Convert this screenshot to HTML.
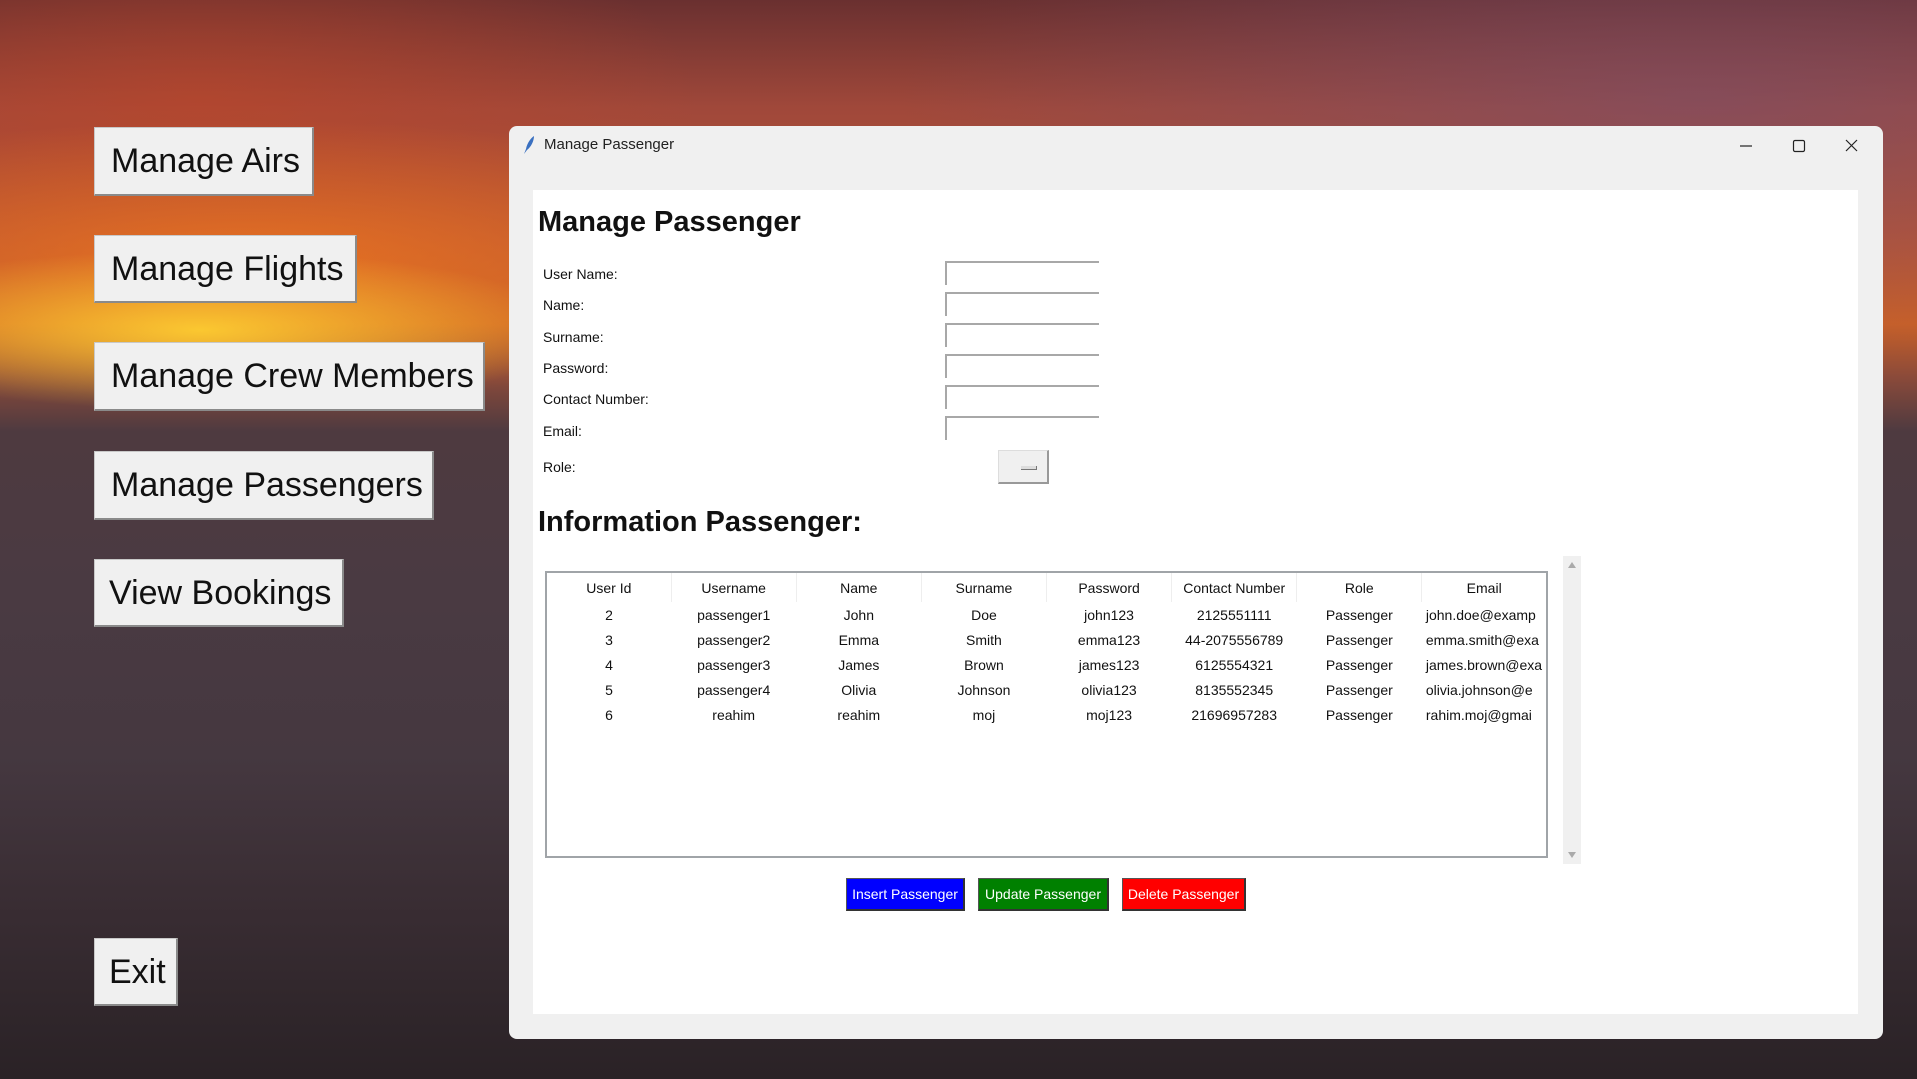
<!DOCTYPE html>
<html><head><meta charset="utf-8"><style>
*{margin:0;padding:0;box-sizing:border-box}
body{width:1917px;height:1079px;overflow:hidden;position:relative;font-family:"Liberation Sans",sans-serif;
background:
radial-gradient(ellipse 380px 80px at 200px 330px,rgba(255,210,50,.9),rgba(255,150,20,0) 100%),
radial-gradient(ellipse 600px 140px at 250px 260px,rgba(240,120,30,.8),rgba(200,80,20,0) 100%),
radial-gradient(ellipse 500px 200px at 200px 100px,rgba(190,70,40,.6),rgba(0,0,0,0) 100%),
radial-gradient(ellipse 800px 250px at 1700px 100px,rgba(120,80,110,.6),rgba(0,0,0,0) 100%),
linear-gradient(180deg,#6a3030 0%,#a0483a 10%,#b85434 22%,#c86028 30%,#8a4a3a 35%,#4e3a40 40%,#4a3a42 55%,#453840 70%,#382c32 85%,#2a2226 100%);}
.lb{position:absolute;left:94px;background:#f0f0f0;border:1px solid #c8c8c8;border-right:2px solid #8a8a8a;border-bottom:2px solid #8a8a8a;font-size:34px;color:#111;padding-left:16px;line-height:66px}
.win{position:absolute;left:509px;top:126px;width:1374px;height:913px;background:#f0f0f0;border-radius:8px}
.tt{position:absolute;left:35px;top:10px;font-size:15px;color:#222}
.content{position:absolute;left:24px;top:64px;width:1325px;height:824px;background:#fff}
.h{position:absolute;left:5px;font-weight:bold;font-size:29px;color:#111}
.lab{position:absolute;left:10px;font-size:14px;color:#111}
.ent{position:absolute;left:412px;width:154px;height:24px;border-top:2px solid #a8a8a8;border-left:2px solid #a8a8a8}
table{position:absolute;left:12px;top:381px;width:1003px;height:282px;border:2px solid #a0a4a8;border-collapse:collapse;font-size:14px;color:#111}
td,th{width:125px;text-align:center;font-weight:normal;height:25px;white-space:nowrap;overflow:hidden;max-width:125px}
th{border-right:1px solid #eee;height:30px}
.btn{position:absolute;top:688px;height:33px;color:#fff;font-size:14px;line-height:31px;text-align:center;border:1px solid #555;border-right:2px solid #333;border-bottom:2px solid #333}
</style></head><body>
<div class="lb" style="top:127px;width:220px;height:69px">Manage Airs</div>
<div class="lb" style="top:235px;width:263px;height:68px">Manage Flights</div>
<div class="lb" style="top:342px;width:391px;height:69px">Manage Crew Members</div>
<div class="lb" style="top:451px;width:340px;height:69px">Manage Passengers</div>
<div class="lb" style="top:559px;width:250px;height:68px;padding-left:14px">View Bookings</div>
<div class="lb" style="top:938px;width:84px;height:68px;padding-left:14px">Exit</div>

<div class="win">
<svg style="position:absolute;left:13px;top:9px" width="14" height="20" viewBox="0 0 14 20"><path d="M2 19 L4 14 C5 8 9 3 12 1 C12 6 9 12 5 15 Z" fill="#3a70c0"/></svg>
<div class="tt">Manage Passenger</div>
<svg style="position:absolute;left:1222px;top:10px" width="140" height="20"><path d="M9 10h12" stroke="#222" stroke-width="1.2"/><rect x="62.5" y="4.5" width="11" height="11" rx="1.5" fill="none" stroke="#222" stroke-width="1.2"/><path d="M115 4l11 11M126 4l-11 11" stroke="#222" stroke-width="1.2"/></svg>
<div class="content">
<div class="h" style="top:16px">Manage Passenger</div>
<div class="lab" style="top:76px">User Name:</div>
<div class="lab" style="top:107px">Name:</div>
<div class="lab" style="top:139px">Surname:</div>
<div class="lab" style="top:170px">Password:</div>
<div class="lab" style="top:201px">Contact Number:</div>
<div class="lab" style="top:233px">Email:</div>
<div class="lab" style="top:269px">Role:</div>
<div class="ent" style="top:71px"></div>
<div class="ent" style="top:102px"></div>
<div class="ent" style="top:133px"></div>
<div class="ent" style="top:164px"></div>
<div class="ent" style="top:195px"></div>
<div class="ent" style="top:226px"></div>
<div style="position:absolute;left:465px;top:260px;width:51px;height:34px;background:#f0f0f0;border:1px solid #ddd;border-right:2px solid #999;border-bottom:2px solid #999"><div style="position:absolute;left:22px;top:15px;width:16px;height:4px;border:1px solid #777;border-top:none;border-left:none;background:#ddd"></div></div>
<div class="h" style="top:316px">Information Passenger:</div>
<table>
<tr><th>User Id</th><th>Username</th><th>Name</th><th>Surname</th><th>Password</th><th>Contact Number</th><th>Role</th><th>Email</th></tr>
<tr><td>2</td><td>passenger1</td><td>John</td><td>Doe</td><td>john123</td><td>2125551111</td><td>Passenger</td><td style="text-align:left;padding-left:4px">john.doe@examp</td></tr>
<tr><td>3</td><td>passenger2</td><td>Emma</td><td>Smith</td><td>emma123</td><td>44-2075556789</td><td>Passenger</td><td style="text-align:left;padding-left:4px">emma.smith@exa</td></tr>
<tr><td>4</td><td>passenger3</td><td>James</td><td>Brown</td><td>james123</td><td>6125554321</td><td>Passenger</td><td style="text-align:left;padding-left:4px">james.brown@exa</td></tr>
<tr><td>5</td><td>passenger4</td><td>Olivia</td><td>Johnson</td><td>olivia123</td><td>8135552345</td><td>Passenger</td><td style="text-align:left;padding-left:4px">olivia.johnson@e</td></tr>
<tr><td>6</td><td>reahim</td><td>reahim</td><td>moj</td><td>moj123</td><td>21696957283</td><td>Passenger</td><td style="text-align:left;padding-left:4px">rahim.moj@gmai</td></tr>
<tr><td colspan="8" style="height:130px"></td></tr>
</table>
<div style="position:absolute;left:1030px;top:366px;width:18px;height:308px;background:#f0f0f0"><div style="position:absolute;left:5px;top:6px;border:4px solid transparent;border-bottom:6px solid #aaa;border-top:none"></div><div style="position:absolute;left:5px;bottom:6px;border:4px solid transparent;border-top:6px solid #aaa;border-bottom:none"></div></div>
<div class="btn" style="left:313px;width:119px;background:#0000ff">Insert Passenger</div>
<div class="btn" style="left:445px;width:131px;background:#008000">Update Passenger</div>
<div class="btn" style="left:589px;width:124px;background:#ff0000">Delete Passenger</div>
</div></div>
</body></html>
